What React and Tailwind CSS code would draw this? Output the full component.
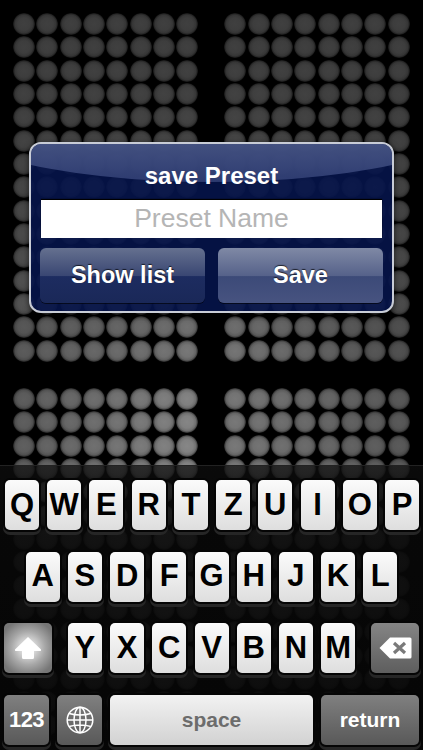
// ─── LED wall behind the dialog ──────────────────────────────────────────────
const lerp = (a, b, t) => a + (b - a) * t;

// brightness of a dot: [left column, right column] at the far end of the panel
const PANELS = [
  { id: 'tl', top: [0.25, 0.25], end: [0.36, 0.47], curve: 2 },
  { id: 'tr', top: [0.25, 0.25], end: [0.46, 0.32], curve: 2 },
  { id: 'bl', top: [0.37, 0.52], end: [0.41, 0.58], curve: 1 },
  { id: 'br', top: [0.47, 0.35], end: [0.5, 0.39], curve: 1 },
];

function DotPanel({ panel }) {
  const dots = [];
  for (let r = 0; r < 15; r++) {
    for (let c = 0; c < 8; c++) {
      const t = Math.pow(r / 14, panel.curve);
      const level = lerp(lerp(panel.top[0], panel.top[1], c / 7), lerp(panel.end[0], panel.end[1], c / 7), t);
      dots.push(
        <div
          key={`${r}-${c}`}
          className="w-[22px] h-[22px] rounded-full bg-[radial-gradient(circle_closest-side,#ffffff_0%,#f4f4f4_55%,#d4d4d4_80%,#8c8c8c_93%,#303030_100%)]"
          style={{ opacity: level }}
        />
      );
    }
  }
  return <div className="grid grid-cols-[repeat(8,22px)] gap-[1.33px] content-start">{dots}</div>;
}

// ─── Keyboard ────────────────────────────────────────────────────────────────
const KEY_SHADOW = 'shadow-[0_0_0_2px_#050505,0_3px_0_2px_#262626]';

function Key({ label }) {
  return (
    <div className={`flex items-center justify-center w-[34px] h-[50px] rounded-[5px] bg-gradient-to-b from-[#fbfbfb] to-[#dedede] text-black font-bold text-[31px] ${KEY_SHADOW}`}>
      {label}
    </div>
  );
}

function FnKey({ children, className = '' }) {
  return (
    <div className={`flex items-center justify-center h-[50px] rounded-[5px] text-white font-bold ${KEY_SHADOW} ${className}`}>
      {children}
    </div>
  );
}

function ShiftIcon() {
  return (
    <svg width="28" height="24" viewBox="0 0 28 24">
      <path d="M14 1 L27 13.5 Q27.5 15 26 15 L20 15 L20 21.5 Q20 23 18.5 23 L9.5 23 Q8 23 8 21.5 L8 15 L2 15 Q0.5 15 1 13.5 Z" fill="#fff" />
    </svg>
  );
}

function DeleteIcon() {
  return (
    <svg width="33" height="22" viewBox="0 0 33 22">
      <path d="M11 0.5 L31 0.5 Q32.5 0.5 32.5 2 L32.5 20 Q32.5 21.5 31 21.5 L11 21.5 L0.5 11 Z" fill="#fff" />
      <path d="M15 6 L26 16 M26 6 L15 16" stroke="#7a7a7a" strokeWidth="3.2" />
    </svg>
  );
}

function GlobeIcon() {
  return (
    <svg width="28" height="28" viewBox="0 0 28 28" fill="none" stroke="#fff" strokeWidth="1.5">
      <circle cx="14" cy="14" r="12.8" />
      <ellipse cx="14" cy="14" rx="6" ry="12.8" />
      <path d="M14 1.2 V26.8 M1.2 14 H26.8 M3 7.5 Q14 10.5 25 7.5 M3 20.5 Q14 17.5 25 20.5" />
    </svg>
  );
}

const ROW1 = ['Q', 'W', 'E', 'R', 'T', 'Z', 'U', 'I', 'O', 'P'];
const ROW2 = ['A', 'S', 'D', 'F', 'G', 'H', 'J', 'K', 'L'];
const ROW3 = ['Y', 'X', 'C', 'V', 'B', 'N', 'M'];

function Keyboard() {
  return (
    <div className="absolute left-0 right-0 bottom-0 h-[285px] bg-[linear-gradient(rgba(14,14,14,0.74),rgba(8,8,8,0.9)_25%,rgba(6,6,6,0.94))] border-t border-[#222222] px-[4px] pt-[14px] flex flex-col gap-[21.5px]">
      <div className="flex justify-between pl-[1px]">
        {ROW1.map((k) => <Key key={k} label={k} />)}
      </div>
      <div className="flex justify-center gap-[8.2px]">
        {ROW2.map((k) => <Key key={k} label={k} />)}
      </div>
      <div className="flex justify-between">
        <FnKey className="w-[48px] bg-[radial-gradient(circle_closest-side,#e6e6e6_20%,#a8a8a8_70%,#767676_120%)]"><ShiftIcon /></FnKey>
        <div className="flex gap-[8.2px]">
          {ROW3.map((k) => <Key key={k} label={k} />)}
        </div>
        <FnKey className="w-[48px] bg-gradient-to-b from-[#858585] to-[#5e5e5e]"><DeleteIcon /></FnKey>
      </div>
      <div className="flex gap-[8px]">
        <FnKey className="w-[45px] text-[22px] tracking-[-0.5px] bg-gradient-to-b from-[#808080] to-[#595959]">123</FnKey>
        <FnKey className="w-[45px] bg-gradient-to-b from-[#808080] to-[#595959]"><GlobeIcon /></FnKey>
        <div className={`flex items-center justify-center w-[203px] h-[50px] rounded-[5px] bg-gradient-to-b from-[#f2f2f2] to-[#d2d2d2] text-[#6c6c6c] font-bold text-[21px] ${KEY_SHADOW}`}>space</div>
        <FnKey className="w-[98px] text-[21px] bg-gradient-to-b from-[#808080] to-[#595959]">return</FnKey>
      </div>
    </div>
  );
}

// ─── Save dialog ─────────────────────────────────────────────────────────────
function DialogButton({ label, className = '' }) {
  return (
    <div className={`flex-1 h-[55px] rounded-[6px] flex items-center justify-center text-white font-bold text-[23.5px] shadow-[0_1px_0_rgba(0,0,0,0.6)] ${className}`}>
      <span className="[text-shadow:0_-1px_1px_rgba(0,0,0,0.7)]">{label}</span>
    </div>
  );
}

function SaveDialog() {
  return (
    <div className="absolute left-[29px] top-[142px] w-[365px] h-[171px] rounded-[12px] border-2 border-[#c8ccd6] bg-[#06144a]/90 overflow-hidden px-[9px] shadow-[0_2px_6px_rgba(0,0,0,0.6)]">
      <div className="absolute left-[-110px] right-[-110px] top-[-120px] h-[158px] rounded-[50%] bg-gradient-to-b from-[#a0a8c0]/90 to-[#36447a]/80" />
      <div className="relative text-center text-white font-bold text-[24px] leading-[26px] pt-[19px]">save Preset</div>
      <div className="relative mt-[11px] mx-[1px] h-[38px] bg-white flex items-center justify-center text-[#b5b5b5] text-[26.5px] shadow-[0_-1px_1px_#000]">Preset Name</div>
      <div className="relative mt-[10px] flex gap-[13px]">
        <DialogButton label="Show list" className="bg-[linear-gradient(#65708f,#3a4773_50%,#1d2c60_52%,#1a2858)]" />
        <DialogButton label="Save" className="bg-[linear-gradient(#7f89a5,#56628a_50%,#3c4a78_52%,#475380)]" />
      </div>
    </div>
  );
}

export default function App() {
  return (
    <div className="relative w-[423px] h-[750px] overflow-hidden bg-black font-['Liberation_Sans',Arial,sans-serif]">
      <div className="grid grid-cols-[185.33px_185.33px] gap-x-[26px] gap-y-[26.3px] pl-[13px] pt-[13px]">
        {PANELS.map((p) => <DotPanel key={p.id} panel={p} />)}
      </div>
      <SaveDialog />
      <Keyboard />
    </div>
  );
}
